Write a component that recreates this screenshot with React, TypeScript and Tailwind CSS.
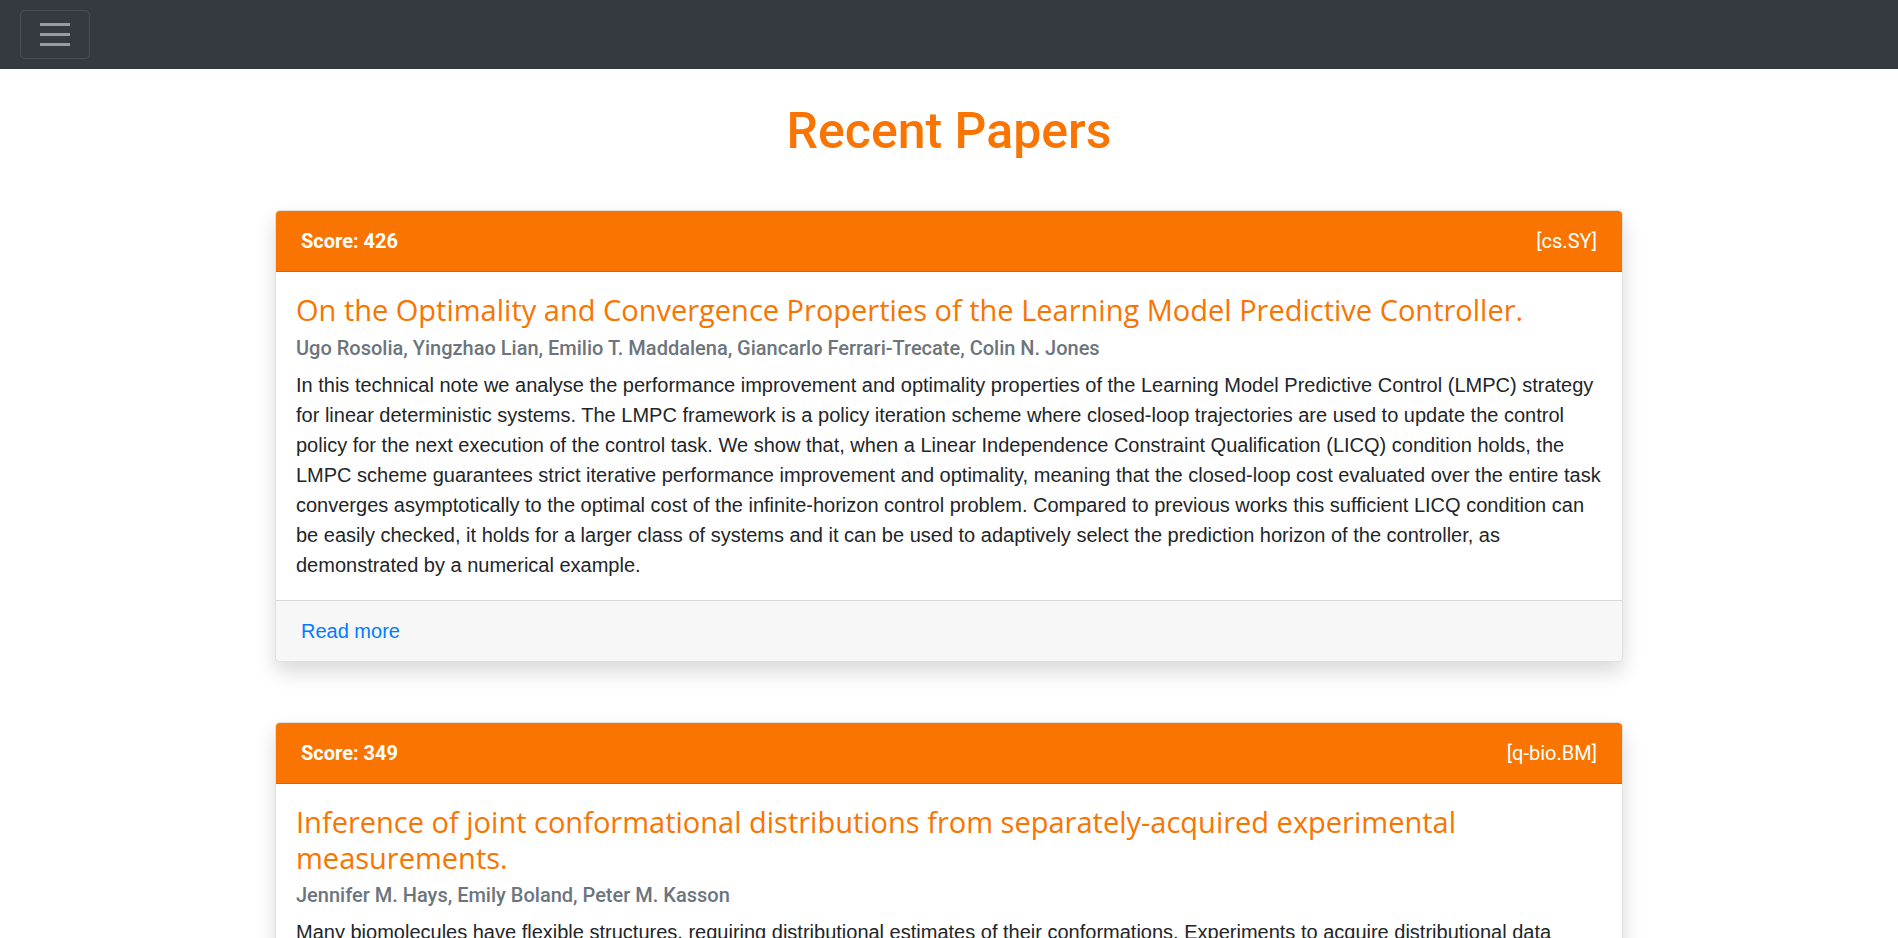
import React from "react";

type Paper = {
  score: number;
  cat: string;
  title: string;
  authors: string;
  abstract: string;
};

const papers: Paper[] = [
  {
    score: 426,
    cat: "[cs.SY]",
    title:
      "On the Optimality and Convergence Properties of the Learning Model Predictive Controller.",
    authors:
      "Ugo Rosolia, Yingzhao Lian, Emilio T. Maddalena, Giancarlo Ferrari-Trecate, Colin N. Jones",
    abstract:
      "In this technical note we analyse the performance improvement and optimality properties of the Learning Model Predictive Control (LMPC) strategy for linear deterministic systems. The LMPC framework is a policy iteration scheme where closed-loop trajectories are used to update the control policy for the next execution of the control task. We show that, when a Linear Independence Constraint Qualification (LICQ) condition holds, the LMPC scheme guarantees strict iterative performance improvement and optimality, meaning that the closed-loop cost evaluated over the entire task converges asymptotically to the optimal cost of the infinite-horizon control problem. Compared to previous works this sufficient LICQ condition can be easily checked, it holds for a larger class of systems and it can be used to adaptively select the prediction horizon of the controller, as demonstrated by a numerical example.",
  },
  {
    score: 349,
    cat: "[q-bio.BM]",
    title:
      "Inference of joint conformational distributions from separately-acquired experimental measurements.",
    authors: "Jennifer M. Hays, Emily Boland, Peter M. Kasson",
    abstract:
      "Many biomolecules have flexible structures, requiring distributional estimates of their conformations. Experiments to acquire distributional data typically measure pairwise distances between two points on the molecule, but joint distributions are often needed to reconstruct the full ensemble. Here we present a method to infer joint distributions from separately-acquired measurements, and we demonstrate its use on experimental data.",
  },
];

function Card({ p }: { p: Paper }) {
  return (
    <div className="overflow-hidden rounded-[5px] border border-black/[0.125] bg-white shadow-[0_10px_20px_rgba(0,0,0,0.15)]">
      <div className="flex justify-between border-b border-black/[0.125] bg-[#f97400] px-[25px] py-[15px] text-[20px] leading-[30px] text-white">
        <span className="font-['Roboto',sans-serif] font-bold">Score: {p.score}</span>
        <span className="font-['Roboto',sans-serif]">{p.cat}</span>
      </div>
      <div className="p-[20px]">
        <h4 className="mb-[15px] font-['Open_Sans',sans-serif] text-[29px] leading-[36px] font-medium text-[#f97400]">
          {p.title}
        </h4>
        <h6 className="-mt-[7.5px] mb-[10px] font-['Roboto',sans-serif] text-[20px] leading-[24px] font-medium text-[#6c757d]">
          {p.authors}
        </h6>
        <p className="text-[20px] leading-[30px] text-[#212529]">{p.abstract}</p>
      </div>
      <div className="border-t border-black/[0.125] bg-[#f7f7f7] px-[25px] py-[15px] text-[20px] leading-[30px]">
        <a href="#" className="text-[#007bff]">
          Read more
        </a>
      </div>
    </div>
  );
}

export default function App() {
  return (
    <div className="min-h-screen bg-white font-['Liberation_Sans',Arial,sans-serif]">
      <nav className="flex h-[69px] items-center bg-[#343a40] px-[20px]">
        <button className="flex h-[49px] w-[70px] flex-col items-center justify-center gap-[7.5px] rounded-[5px] border border-white/10">
          <span className="block h-[2.5px] w-[30px] bg-white/50" />
          <span className="block h-[2.5px] w-[30px] bg-white/50" />
          <span className="block h-[2.5px] w-[30px] bg-white/50" />
        </button>
      </nav>
      <main className="pt-[32px] pb-[60px]">
        <h1 className="mb-[49px] text-center font-['Roboto',sans-serif] text-[50px] leading-[60px] font-medium text-[#f97400]">
          Recent Papers
        </h1>
        <div className="mx-auto flex w-[1348px] flex-col gap-[60px]">
          {papers.map((p) => (
            <Card key={p.score} p={p} />
          ))}
        </div>
      </main>
    </div>
  );
}
